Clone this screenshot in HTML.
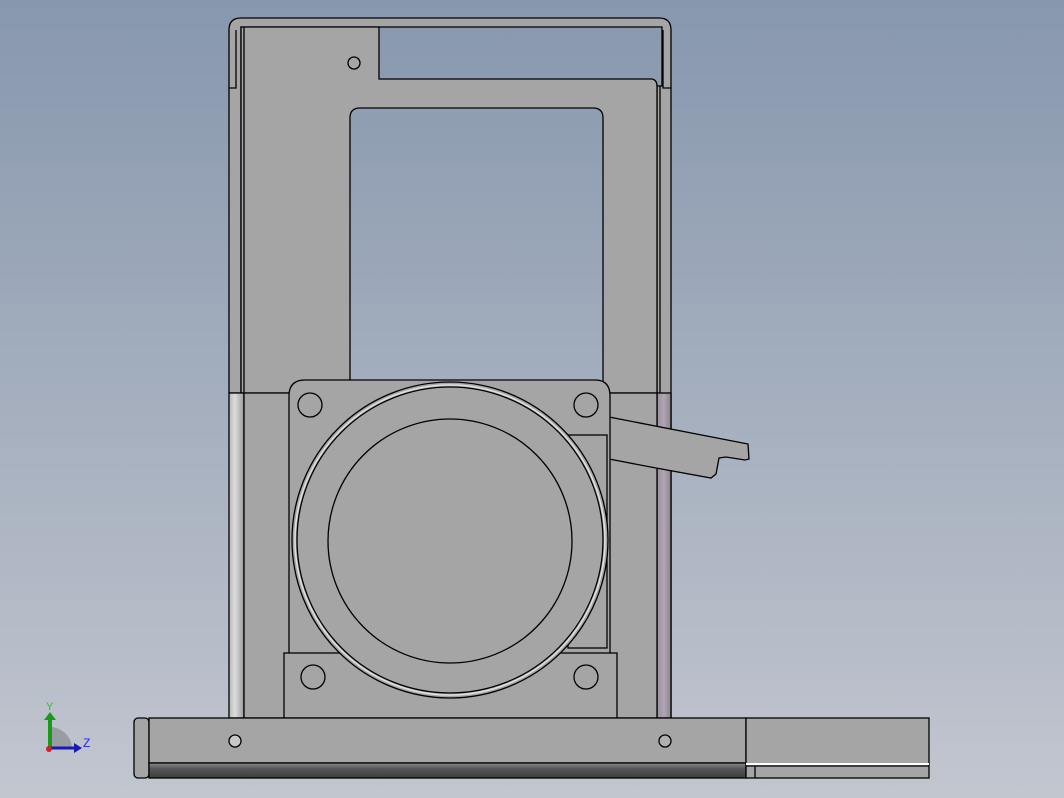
<!DOCTYPE html>
<html><head><meta charset="utf-8"><style>
html,body{margin:0;padding:0;width:1064px;height:798px;overflow:hidden}
svg{display:block}
</style></head><body>
<svg width="1064" height="798" viewBox="0 0 1064 798" xmlns="http://www.w3.org/2000/svg">
<defs>
<linearGradient id="bg" gradientUnits="userSpaceOnUse" x1="0" y1="0" x2="0" y2="798"><stop offset="0" stop-color="#8797ad"/><stop offset="1" stop-color="#c2c6cf"/></linearGradient>
<linearGradient id="cylL" x1="0" y1="0" x2="1" y2="0"><stop offset="0" stop-color="#b8b8b8"/><stop offset="0.4" stop-color="#dcdcdc"/><stop offset="1" stop-color="#9a9a9a"/></linearGradient>
<linearGradient id="cylR" x1="0" y1="0" x2="1" y2="0"><stop offset="0" stop-color="#9a8f9c"/><stop offset="0.5" stop-color="#b0a6b2"/><stop offset="1" stop-color="#8c8290"/></linearGradient>
<linearGradient id="dark" x1="0" y1="0" x2="0" y2="1"><stop offset="0" stop-color="#8a8a8a"/><stop offset="0.4" stop-color="#555"/><stop offset="1" stop-color="#3e3e3e"/></linearGradient>
</defs>
<rect width="1064" height="798" fill="url(#bg)"/>
<g stroke="#000" stroke-width="1.3" fill="#a5a5a5">
<!-- top strip -->
<path d="M229,393 V30 Q229,18 241,18 H659 Q671,18 671,30 V718 H657 V86 H662 V27 H241 V393 Z"/>
<path d="M229,88 H236 V30" fill="none"/>
<path d="M671,88 H663 V30" fill="none"/>
<!-- main plate -->
<path d="M241,393 V27 H379 V79 H652 Q657,80 657,86 V393 Z"/>
<line x1="244" y1="27" x2="244" y2="393"/>
<line x1="660" y1="86" x2="660" y2="393"/>
<circle cx="354" cy="63" r="6"/>
<!-- window -->
<path d="M350,390 V118 Q350,108 360,108 H593 Q603,108 603,118 V390 Z" fill="url(#bg)"/>
<!-- side cylinders -->
<rect x="229" y="393" width="15" height="325" fill="url(#cylL)"/>
<rect x="657" y="393" width="14" height="325" fill="url(#cylR)"/>
<rect x="244" y="393" width="413" height="325"/>
<!-- lever -->
<path d="M609,417 L748,444 L749,459 L745,460 L726,457 L719,458 L716,474 L711,478 L656,468 L609,459 Z"/>
<!-- motor flange -->
<path d="M289,660 V396 Q289,380 305,380 H595 Q610,380 610,396 V660 Z"/>
<rect x="568" y="435" width="39" height="213"/>
<rect x="284" y="653" width="333" height="65"/>
<circle cx="310" cy="405" r="12"/>
<circle cx="586" cy="405" r="12"/>
<circle cx="313" cy="677" r="12"/>
<circle cx="586" cy="677" r="12"/>
<circle cx="450" cy="540" r="158" fill="#a5a5a5"/>
<circle cx="450" cy="540" r="155" fill="none" stroke="#e0e0e0" stroke-width="1.5"/>
<circle cx="450" cy="540" r="153" fill="none"/>
<circle cx="450" cy="541" r="122" fill="none"/>
<!-- base -->
<rect x="134" y="718" width="15" height="60" rx="4"/>
<rect x="149" y="718" width="597" height="45"/>
<rect x="149" y="763" width="597" height="15" fill="url(#dark)"/>
<rect x="746" y="718" width="183" height="60"/>
<line x1="746" y1="764" x2="929" y2="764" stroke="#fff" stroke-width="2"/>
<line x1="746" y1="766" x2="929" y2="766"/>
<line x1="755" y1="766" x2="755" y2="778"/>
<circle cx="235" cy="741" r="6" fill="#c8c8c8"/>
<circle cx="665" cy="741" r="6" fill="#b0b0b0"/>
</g>
<!-- axis triad -->
<path d="M50,748 V727 A22,22 0 0 1 72,748 Z" fill="#9a9ca4"/>
<line x1="50" y1="748" x2="50" y2="718" stroke="#1a9a1a" stroke-width="4"/>
<polygon points="44,720 56,720 50,712" fill="#1a9a1a"/>
<line x1="50" y1="748" x2="76" y2="748" stroke="#1a1ab0" stroke-width="3"/>
<polygon points="74,743 82,748 74,753" fill="#1a1ab0"/>
<circle cx="49" cy="749" r="3" fill="#d02020"/>
<text x="46" y="710" font-family="Liberation Sans, sans-serif" font-size="11" fill="#22cc22">Y</text>
<text x="83" y="747" font-family="Liberation Sans, sans-serif" font-size="12" fill="#2222ee">Z</text>
</svg>
</body></html>
